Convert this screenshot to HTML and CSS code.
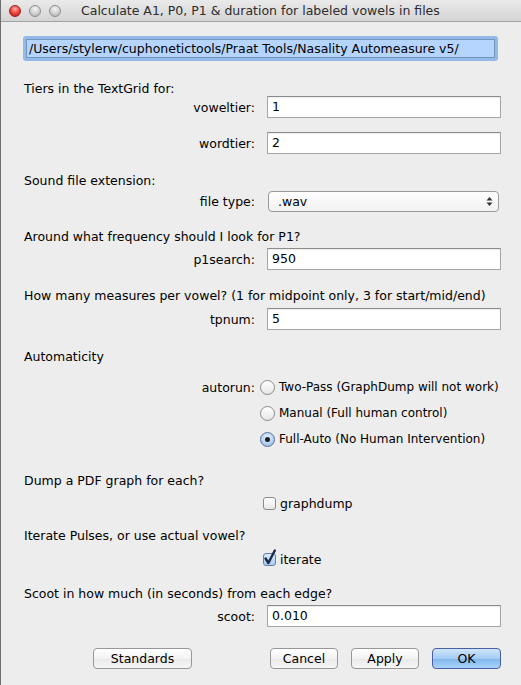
FILE: index.html
```html
<!DOCTYPE html>
<html>
<head>
<meta charset="utf-8">
<link rel="stylesheet" href="styles.css">
</head>
<body>
<div class="window">
  <div class="titlebar">
    <div class="lights">
      <span class="light close"></span>
      <span class="light"></span>
      <span class="light"></span>
    </div>
    <div class="title">Calculate A1, P0, P1 &amp; duration for labeled vowels in files</div>
  </div>
  <div class="content">
    <div class="pathwrap"><div class="pathfield"><span class="sel">/Users/stylerw/cuphonetictools/Praat Tools/Nasality Automeasure v5/</span></div></div>

    <div class="heading mt21">Tiers in the TextGrid for:</div>
    <div class="row"><span class="label">voweltier:</span><div class="field">1</div></div>
    <div class="row mt14"><span class="label">wordtier:</span><div class="field">2</div></div>

    <div class="heading mt20">Sound file extension:</div>
    <div class="row mt2"><span class="label">file type:</span>
      <div class="select"><span>.wav</span>
        <svg class="arrows" width="7" height="11" viewBox="0 0 7 11"><path d="M3.5 1 L6.5 4.5 L0.5 4.5 Z M3.5 10 L6.5 6.5 L0.5 6.5 Z" fill="#333"/></svg>
      </div>
    </div>

    <div class="heading mt18">Around what frequency should I look for P1?</div>
    <div class="row mt4"><span class="label">p1search:</span><div class="field">950</div></div>

    <div class="heading mt19">How many measures per vowel? (1 for midpoint only, 3 for start/mid/end)</div>
    <div class="row mt5"><span class="label">tpnum:</span><div class="field">5</div></div>

    <div class="heading mt20">Automaticity</div>
    <div class="radios mt10">
      <div class="rrow"><span class="label">autorun:</span><div class="opt"><span class="radio"></span>Two-Pass (GraphDump will not work)</div></div>
      <div class="rrow"><span class="label"></span><div class="opt"><span class="radio"></span>Manual (Full human control)</div></div>
      <div class="rrow"><span class="label"></span><div class="opt"><span class="radio on"></span>Full-Auto (No Human Intervention)</div></div>
    </div>

    <div class="heading mt22">Dump a PDF graph for each?</div>
    <div class="row mt4"><span class="label"></span><div class="opt"><span class="check"></span>graphdump</div></div>

    <div class="heading mt15">Iterate Pulses, or use actual vowel?</div>
    <div class="row mt5"><span class="label"></span><div class="opt"><span class="check on"><svg width="14" height="17" viewBox="0 0 14 17"><path d="M2.6 9.5 L5.4 14 L11.8 1.5" fill="none" stroke="#1b2b4a" stroke-width="2.4" stroke-linecap="round" stroke-linejoin="round"/></svg></span>iterate</div></div>

    <div class="heading mt17">Scoot in how much (in seconds) from each edge?</div>
    <div class="row mt4"><span class="label">scoot:</span><div class="field">0.010</div></div>

    <div class="buttons">
      <div class="btn std">Standards</div>
      <div class="btngroup">
        <div class="btn">Cancel</div>
        <div class="btn">Apply</div>
        <div class="btn ok">OK</div>
      </div>
    </div>
  </div>
</div>
</body>
</html>
```
FILE: styles.css
```css
html, body {
  margin: 0;
  padding: 0;
  background: #ededed;
}
.window {
  width: 521px;
  height: 685px;
  box-sizing: border-box;
  border-left: 1px solid #6e6e6e;
  background: #ededed;
  font-family: "DejaVu Sans", sans-serif;
  font-size: 12.5px;
  color: #000;
  overflow: hidden;
}
.titlebar {
  height: 21px;
  border-bottom: 1px solid #a3a3a3;
  background: linear-gradient(#eaeaea, #d4d4d4);
  display: flex;
  align-items: center;
}
.lights {
  display: flex;
  gap: 8px;
  padding-left: 8px;
  width: 71px;
  box-sizing: border-box;
}
.light {
  width: 12px;
  height: 12px;
  border-radius: 50%;
  box-sizing: border-box;
  border: 1px solid #8f8f8f;
  background: radial-gradient(circle at 50% 30%, #f4f4f4 0%, #cfcfcf 55%, #a9a9a9 100%);
}
.light.close {
  border-color: #9c1d1d;
  background: radial-gradient(circle at 50% 30%, #ffb0a8 0%, #f2423b 50%, #b31414 100%);
}
.title {
  padding-left: 9px;
  font-size: 12.5px;
  color: #2c2c2c;
  white-space: nowrap;
}
.content {
  padding: 0 21px 0 22px;
}
.pathwrap {
  margin-top: 14px;
  height: 25px;
  width: 475px;
  box-sizing: border-box;
  border-radius: 3px;
  background: #93bae6;
  padding: 3px;
}
.pathfield {
  height: 19px;
  box-sizing: border-box;
  border: 1px solid #7294c0;
  background: #b5d5fe;
  padding-left: 2px;
  line-height: 17px;
  font-size: 12.5px;
  white-space: nowrap;
  overflow: hidden;
}
.heading {
  height: 14px;
  line-height: 14px;
  padding-left: 1px;
  white-space: nowrap;
}
.row, .rrow {
  display: grid;
  grid-template-columns: 232px 234px;
  column-gap: 12px;
  align-items: center;
  height: 22px;
}
.rrow {
  height: 26px;
}
.label {
  text-align: right;
  white-space: nowrap;
}
.field {
  height: 22px;
  box-sizing: border-box;
  background: #fff;
  border: 1px solid #a6a6a6;
  border-top-color: #8c8c8c;
  box-shadow: inset 0 1px 1px rgba(0,0,0,0.08);
  padding-left: 4px;
  line-height: 20px;
  font-size: 12.5px;
}
.select {
  height: 21px;
  width: 231px;
  margin-left: 1px;
  box-sizing: border-box;
  border: 1px solid #9a9a9a;
  border-radius: 4px;
  background: linear-gradient(#ffffff, #f1f1f1);
  display: flex;
  align-items: center;
  justify-content: space-between;
  padding: 0 5px 0 9px;
  font-size: 12.5px;
}
.arrows {
  display: block;
}
.opt {
  display: flex;
  align-items: center;
  white-space: nowrap;
  margin-left: -7px;
  font-size: 12px;
}
.radio {
  width: 15px;
  height: 15px;
  box-sizing: border-box;
  border-radius: 50%;
  border: 1px solid #8a8a8a;
  background: linear-gradient(#ffffff, #e6e6e6);
  margin-right: 4px;
  flex: none;
  display: flex;
  align-items: center;
  justify-content: center;
}
.radio.on {
  border-color: #5a6f98;
  background: radial-gradient(circle at 50% 35%, #eaf4ff 0%, #b3d3f4 55%, #87b3e2 100%);
}
.radio.on::after {
  content: "";
  width: 5px;
  height: 5px;
  border-radius: 50%;
  background: #1a1a1a;
}
.row .opt {
  margin-left: -4px;
  font-size: 12.5px;
}
.check {
  position: relative;
  width: 13px;
  height: 13px;
  box-sizing: border-box;
  border: 1px solid #8a8a8a;
  border-radius: 3px;
  background: linear-gradient(#ffffff, #e8e8e8);
  margin-right: 4px;
  flex: none;
}
.check.on {
  border-color: #6a7fa8;
  background: linear-gradient(#d9eafc, #a9cdf3);
}
.check svg {
  position: absolute;
  left: -1px;
  top: -5px;
}
.buttons {
  margin-top: 21px;
  display: flex;
  align-items: center;
  margin-left: -22px;
  margin-right: -21px;
  padding: 0 20px 0 92px;
}
.btngroup {
  margin-left: auto;
  display: flex;
  gap: 13px;
}
.btn {
  height: 21px;
  box-sizing: border-box;
  border: 1px solid #979797;
  border-radius: 4px;
  background: linear-gradient(#ffffff, #f3f3f3 50%, #e9e9e9 51%, #f6f6f6);
  width: 68px;
  text-align: center;
  line-height: 19px;
  font-size: 12.5px;
}
.btn.std {
  width: 99px;
}
.btn.ok {
  width: 69px;
  border-color: #4a5ea3;
  background: linear-gradient(#cfe5fb, #a4ccf3 50%, #7fb6ec 51%, #a9d4fa);
}
.mt2 { margin-top: 2px; }
.mt4 { margin-top: 4px; }
.mt5 { margin-top: 5px; }
.mt10 { margin-top: 10px; }
.mt14 { margin-top: 14px; }
.mt15 { margin-top: 15px; }
.mt17 { margin-top: 17px; }
.mt18 { margin-top: 18px; }
.mt19 { margin-top: 19px; }
.mt20 { margin-top: 20px; }
.mt21 { margin-top: 21px; }
.mt22 { margin-top: 22px; }
```
